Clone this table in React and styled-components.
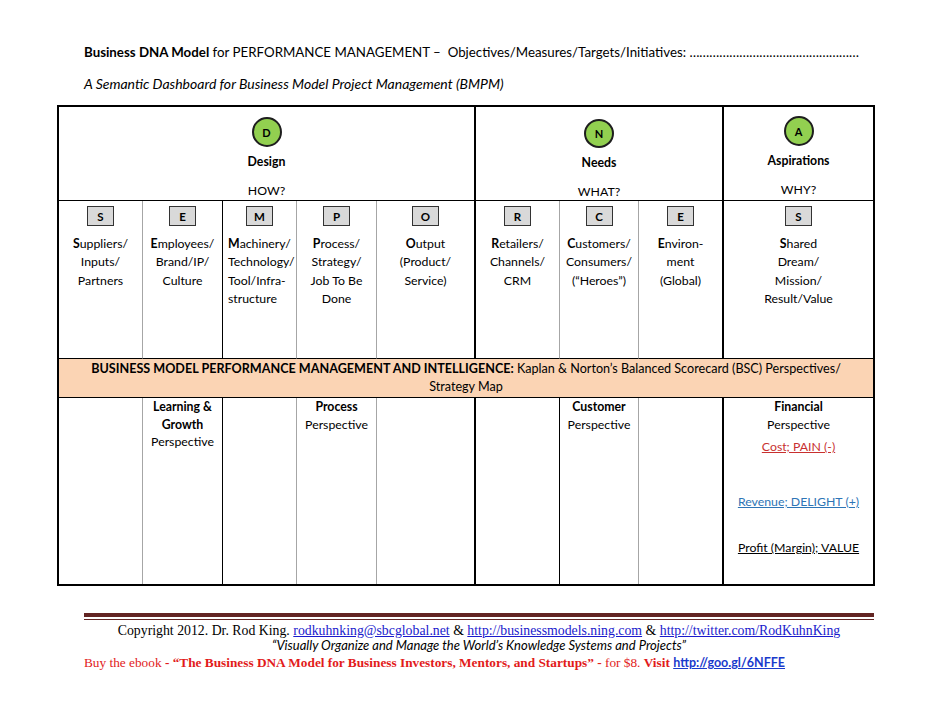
import React from 'react';
import styled, { createGlobalStyle } from 'styled-components';

const GlobalStyle = createGlobalStyle`
  body {
    margin: 0;
    background: #fff;
    color: #000;
    font-family: Lato, "Open Sans", sans-serif;
  }
`;

const edges = {
  none: 'none',
  grey: '1px solid #a6a6a6',
  black: '1px solid #000',
  thick: '2px solid #000',
};

const Page = styled.div`
  width: 942px;
  height: 728px;
  padding-top: 44px;
  box-sizing: border-box;
`;

const Heading = styled.div`
  padding-left: 84px;
  font-size: 13.3px;
  line-height: 17px;
  white-space: nowrap;
`;

const Subtitle = styled(Heading)`
  margin-top: 14px;
  font-size: 14px;
  font-style: italic;
`;

const Grid = styled.div`
  margin: 13px 0 0 57px;
  width: 818px;
  box-sizing: border-box;
  border: 2px solid #000;
  display: grid;
  grid-template-columns: 83px 80px 74px 80px 98px 85px 79px 84px 151px;
  font-size: 12.3px;
`;

const TopCell = styled.div`
  grid-column: span ${p => p.$span};
  height: 94px;
  box-sizing: border-box;
  border-bottom: 1px solid #000;
  border-left: ${p => edges[p.$edge]};
  padding-top: ${p => 10 + (p.$drop || 0)}px;
  display: flex;
  flex-direction: column;
  align-items: center;
`;

const Circle = styled.div`
  width: 30px;
  height: 30px;
  box-sizing: border-box;
  border-radius: 50%;
  background: #92d050;
  border: 2px solid #1e1e1e;
  display: flex;
  align-items: center;
  justify-content: center;
  font-weight: 700;
  font-size: 11px;
`;

const TopLabel = styled.div`
  margin-top: 6px;
  font-weight: 700;
  line-height: 17px;
`;

const TopQuestion = styled.div`
  margin-top: 12px;
  line-height: 17px;
`;

const LetterCell = styled.div`
  height: 158px;
  box-sizing: border-box;
  border-bottom: 1px solid #000;
  border-left: ${p => edges[p.$edge]};
  padding-top: 5px;
  display: flex;
  flex-direction: column;
  align-items: center;
`;

const LetterBox = styled.div`
  width: 27px;
  height: 20px;
  box-sizing: border-box;
  background: #d9d9d9;
  border: 1.5px solid #333;
  display: flex;
  align-items: center;
  justify-content: center;
  font-weight: 700;
  font-size: 11.5px;
`;

const LetterText = styled.div`
  align-self: stretch;
  margin-top: 9px;
  padding-left: ${p => (p.$left ? 5 : 0)}px;
  text-align: ${p => (p.$left ? 'left' : 'center')};
  line-height: 18.3px;
  white-space: nowrap;

  b {
    font-weight: 700;
  }
`;

const Band = styled.div`
  grid-column: 1 / -1;
  height: 39px;
  box-sizing: border-box;
  background: #fbd4b4;
  border-bottom: 1px solid #000;
  padding-top: 1px;
  text-align: center;
  font-size: 12.6px;
  line-height: 18px;
  white-space: nowrap;
`;

const PerspectiveCell = styled.div`
  height: 186px;
  box-sizing: border-box;
  border-left: ${p => edges[p.$edge]};
  text-align: center;
  line-height: 17.5px;
`;

const Strong = styled.div`
  font-weight: 700;
`;

const Measure = styled.div`
  margin-top: ${p => p.$gap}px;
  color: ${p => p.$color};
  text-decoration: underline;
  line-height: 18px;
`;

const Footer = styled.footer`
  margin: 27px 0 0 84px;
  width: 790px;
`;

const Rule = styled.div`
  height: 2px;
  border-top: 4px solid #632523;
  border-bottom: 1px solid #632523;
`;

const Copyright = styled.div`
  margin-top: 3px;
  text-align: center;
  font-family: "Liberation Serif", serif;
  font-size: 13.8px;
  line-height: 15px;
  white-space: nowrap;
`;

const Link = styled.a`
  color: #1a1acc;
  text-decoration: underline;
`;

const Quote = styled.div`
  text-align: center;
  font-style: italic;
  font-size: 13px;
  line-height: 14px;
`;

const Promo = styled.div`
  margin-top: 3px;
  font-family: "Liberation Serif", serif;
  font-size: 13.3px;
  line-height: 16px;
  color: #e21b1b;
  white-space: nowrap;
`;

const PromoLink = styled.a`
  font-family: Lato, sans-serif;
  font-weight: 700;
  font-size: 12.5px;
  color: #1a3acc;
  text-decoration: underline;
`;

const top = [
  { letter: 'D', label: 'Design', q: 'HOW?', span: 5, edge: 'none', drop: 0 },
  { letter: 'N', label: 'Needs', q: 'WHAT?', span: 3, edge: 'thick', drop: 2 },
  { letter: 'A', label: 'Aspirations', q: 'WHY?', span: 1, edge: 'thick', drop: -1 },
];

const letters = [
  { l: 'S', edge: 'none', lines: ['uppliers/', 'Inputs/', 'Partners'] },
  { l: 'E', edge: 'grey', lines: ['mployees/', 'Brand/IP/', 'Culture'] },
  { l: 'M', edge: 'black', left: true, lines: ['achinery/', 'Technology/', 'Tool/Infra-', 'structure'] },
  { l: 'P', edge: 'grey', lines: ['rocess/', 'Strategy/', 'Job To Be', 'Done'] },
  { l: 'O', edge: 'grey', lines: ['utput', '(Product/', 'Service)'] },
  { l: 'R', edge: 'thick', lines: ['etailers/', 'Channels/', 'CRM'] },
  { l: 'C', edge: 'grey', lines: ['ustomers/', 'Consumers/', '(“Heroes”)'] },
  { l: 'E', edge: 'grey', lines: ['nviron-', 'ment', '(Global)'] },
  { l: 'S', edge: 'thick', lines: ['hared', 'Dream/', 'Mission/', 'Result/Value'] },
];

const perspectives = [
  { edge: 'none' },
  { edge: 'grey', bold: ['Learning &', 'Growth'], rest: 'Perspective' },
  { edge: 'black' },
  { edge: 'grey', bold: ['Process'], rest: 'Perspective' },
  { edge: 'grey' },
  { edge: 'thick' },
  { edge: 'black', bold: ['Customer'], rest: 'Perspective' },
  { edge: 'grey' },
];

export default function App() {
  return (
    <Page>
      <GlobalStyle />
      <Heading>
        <b>Business DNA Model</b> for PERFORMANCE MANAGEMENT –&nbsp; Objectives/Measures/Targets/Initiatives: ……………………………………………
      </Heading>
      <Subtitle>A Semantic Dashboard for Business Model Project Management (BMPM)</Subtitle>

      <Grid>
        {top.map(t => (
          <TopCell key={t.letter} $span={t.span} $edge={t.edge} $drop={t.drop}>
            <Circle>{t.letter}</Circle>
            <TopLabel>{t.label}</TopLabel>
            <TopQuestion>{t.q}</TopQuestion>
          </TopCell>
        ))}

        {letters.map((c, i) => (
          <LetterCell key={i} $edge={c.edge}>
            <LetterBox>{c.l}</LetterBox>
            <LetterText $left={c.left}>
              {c.lines.map((line, j) => (
                <div key={j}>
                  {j === 0 && <b>{c.l}</b>}
                  {line}
                </div>
              ))}
            </LetterText>
          </LetterCell>
        ))}

        <Band>
          <b>BUSINESS MODEL PERFORMANCE MANAGEMENT AND INTELLIGENCE:</b> Kaplan &amp; Norton’s Balanced Scorecard (BSC) Perspectives/
          <br />
          Strategy Map
        </Band>

        {perspectives.map((p, i) => (
          <PerspectiveCell key={i} $edge={p.edge}>
            {p.bold && p.bold.map(b => <Strong key={b}>{b}</Strong>)}
            {p.rest}
          </PerspectiveCell>
        ))}
        <PerspectiveCell $edge="thick">
          <Strong>Financial</Strong>
          Perspective
          <Measure $gap={5} $color="#c8302f">Cost; PAIN (-)</Measure>
          <Measure $gap={37} $color="#2e75b6">Revenue; DELIGHT (+)</Measure>
          <Measure $gap={28} $color="#000">Profit (Margin); VALUE</Measure>
        </PerspectiveCell>
      </Grid>

      <Footer>
        <Rule />
        <Copyright>
          Copyright 2012. Dr. Rod King. <Link>rodkuhnking@sbcglobal.net</Link> &amp;{' '}
          <Link>http://businessmodels.ning.com</Link> &amp; <Link>http://twitter.com/RodKuhnKing</Link>
        </Copyright>
        <Quote>“Visually Organize and Manage the World’s Knowledge Systems and Projects”</Quote>
        <Promo>
          Buy the ebook <b>- “The Business DNA Model for Business Investors, Mentors, and Startups” -</b> for $8.{' '}
          <b>Visit</b> <PromoLink>http://goo.gl/6NFFE</PromoLink>
        </Promo>
      </Footer>
    </Page>
  );
}
